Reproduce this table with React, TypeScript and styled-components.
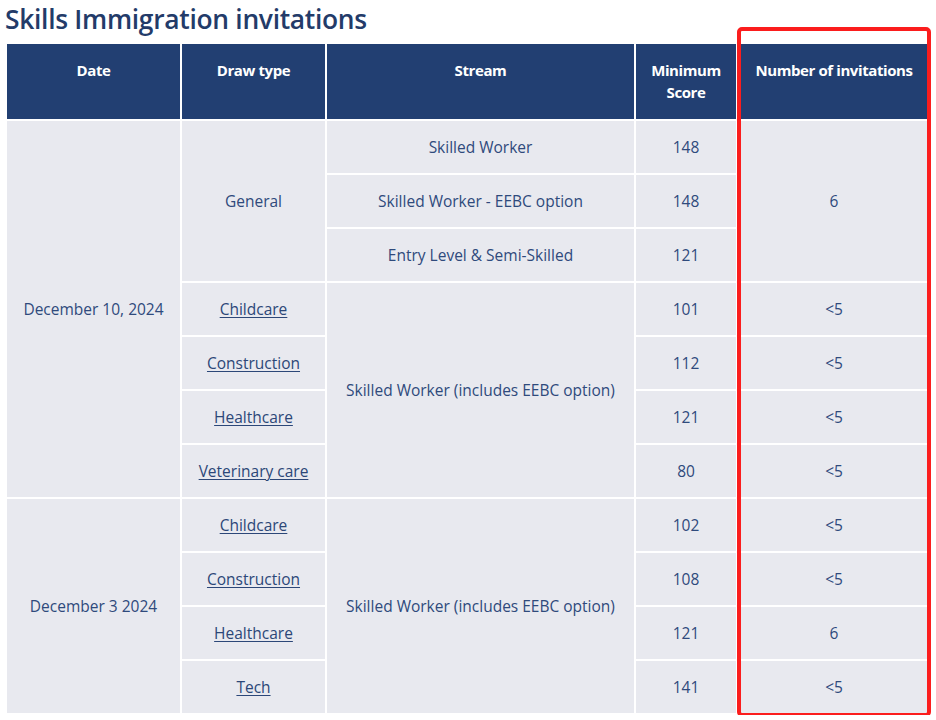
import React from "react";
import styled, { createGlobalStyle } from "styled-components";

const Global = createGlobalStyle`
  html, body { margin: 0; padding: 0; background: #ffffff; }
  body { font-family: "Open Sans", "Noto Sans", sans-serif; }
`;

const Page = styled.div`
  position: relative;
  padding: 0 6px 0 5px;
  width: 936px;
  box-sizing: border-box;
`;

const Title = styled.h2`
  margin: 0;
  height: 42px;
  font-size: 26.4px;
  line-height: 38px;
  font-weight: 600;
  color: #233b69;
  letter-spacing: -0.3px;
`;

const Table = styled.table`
  width: 925px;
  table-layout: fixed;
  border-collapse: collapse;
  margin-top: 2px;
`;

const HeadCell = styled.th`
  background: #223f72;
  color: #ffffff;
  font-size: 15px;
  font-weight: 700;
  letter-spacing: -0.4px;
  line-height: 22px;
  vertical-align: top;
  text-align: center;
  padding: 15px 8px 0;
  height: 60px;
  border: 2px solid #ffffff;
  border-top: 0;
`;

const Cell = styled.td`
  background: #e8e9ef;
  color: #2f4a7c;
  font-size: 15.5px;
  line-height: 20px;
  text-align: center;
  vertical-align: middle;
  height: 54px;
  box-sizing: border-box;
  padding: 0 8px;
  border: 2px solid #ffffff;
`;

const Link = styled.a`
  color: #2c4778;
  text-decoration: underline;
  text-underline-offset: 2px;
  text-decoration-thickness: 1px;
`;

const Highlight = styled.div`
  position: absolute;
  left: 737px;
  top: 27px;
  width: 194px;
  height: 690px;
  box-sizing: border-box;
  border: 4px solid #fb1d1d;
  border-radius: 5px;
  pointer-events: none;
`;

type Row = {
  date?: { text: string; span: number };
  draw?: { text: string; span: number; link?: boolean };
  stream?: { text: string; span: number };
  score: string;
  count?: { text: string; span: number };
};

const rows: Row[] = [
  {
    date: { text: "December 10, 2024", span: 7 },
    draw: { text: "General", span: 3 },
    stream: { text: "Skilled Worker", span: 1 },
    score: "148",
    count: { text: "6", span: 3 },
  },
  { stream: { text: "Skilled Worker - EEBC option", span: 1 }, score: "148" },
  { stream: { text: "Entry Level & Semi-Skilled", span: 1 }, score: "121" },
  {
    draw: { text: "Childcare", span: 1, link: true },
    stream: { text: "Skilled Worker (includes EEBC option)", span: 4 },
    score: "101",
    count: { text: "<5", span: 1 },
  },
  { draw: { text: "Construction", span: 1, link: true }, score: "112", count: { text: "<5", span: 1 } },
  { draw: { text: "Healthcare", span: 1, link: true }, score: "121", count: { text: "<5", span: 1 } },
  { draw: { text: "Veterinary care", span: 1, link: true }, score: "80", count: { text: "<5", span: 1 } },
  {
    date: { text: "December 3 2024", span: 4 },
    draw: { text: "Childcare", span: 1, link: true },
    stream: { text: "Skilled Worker (includes EEBC option)", span: 4 },
    score: "102",
    count: { text: "<5", span: 1 },
  },
  { draw: { text: "Construction", span: 1, link: true }, score: "108", count: { text: "<5", span: 1 } },
  { draw: { text: "Healthcare", span: 1, link: true }, score: "121", count: { text: "6", span: 1 } },
  { draw: { text: "Tech", span: 1, link: true }, score: "141", count: { text: "<5", span: 1 } },
];

export default function App() {
  return (
    <Page>
      <Global />
      <Title>Skills Immigration invitations</Title>
      <Table>
        <colgroup>
          <col style={{ width: 175 }} />
          <col style={{ width: 145 }} />
          <col style={{ width: 309 }} />
          <col style={{ width: 102 }} />
          <col style={{ width: 194 }} />
        </colgroup>
        <thead>
          <tr>
            <HeadCell>Date</HeadCell>
            <HeadCell>Draw type</HeadCell>
            <HeadCell>Stream</HeadCell>
            <HeadCell>
              Minimum
              <br />
              Score
            </HeadCell>
            <HeadCell>Number of invitations</HeadCell>
          </tr>
        </thead>
        <tbody>
          {rows.map((r, i) => (
            <tr key={i}>
              {r.date && <Cell rowSpan={r.date.span}>{r.date.text}</Cell>}
              {r.draw && (
                <Cell rowSpan={r.draw.span}>
                  {r.draw.link ? <Link href="#">{r.draw.text}</Link> : r.draw.text}
                </Cell>
              )}
              {r.stream && <Cell rowSpan={r.stream.span}>{r.stream.text}</Cell>}
              <Cell>{r.score}</Cell>
              {r.count && <Cell rowSpan={r.count.span}>{r.count.text}</Cell>}
            </tr>
          ))}
        </tbody>
      </Table>
      <Highlight />
    </Page>
  );
}
